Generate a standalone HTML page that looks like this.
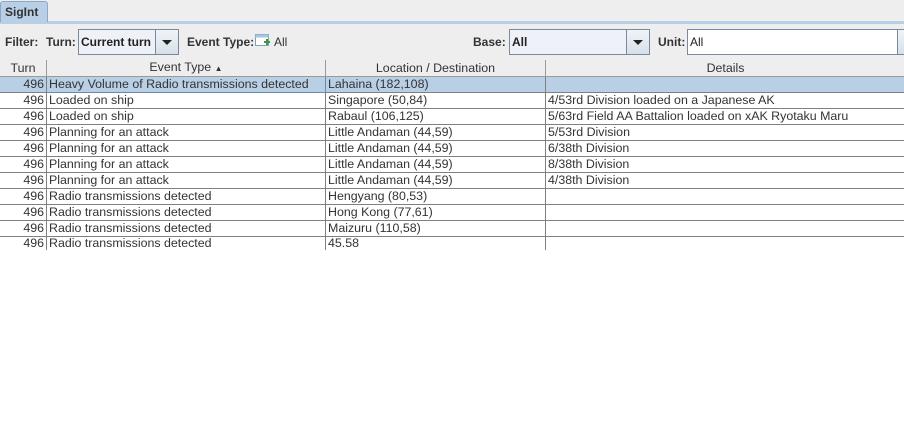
<!DOCTYPE html><html><head><style>
body{margin:0;width:904px;height:438px;background:#fff;font-family:"Liberation Sans",sans-serif;font-size:12px;position:relative;overflow:hidden;color:#333}
.a{position:absolute}
.tabbar{left:0;top:0;width:904px;height:21px;background:#eeeeee;border-bottom:3px solid #b8cfe5}
.tab{left:0;top:1px;width:46px;height:20px;background:#b8cfe5;border:1px solid #8da8c6;border-bottom:none;font-weight:bold;font-size:12px;line-height:20px;text-indent:4px;color:#333;border-radius:3px 3px 0 0}
.tool{left:0;top:24px;width:904px;height:36px;background:#eeeeee}
.lbl{font-weight:bold;top:35px;color:#333}
.combo{top:29px;height:24px;border:1px solid #7a8a99;background:#eef2f8;font-weight:bold;line-height:24px;text-indent:2px;color:#222}
.btn{position:absolute;right:0;top:0;width:22px;height:24px;border-left:1px solid #7a8a99;background:linear-gradient(#f0f4f8,#d6e0ea)}
.btn:after{content:"";position:absolute;left:6px;top:10px;border-left:5px solid transparent;border-right:5px solid transparent;border-top:5px solid #222}
table{position:absolute;left:-1px;top:60px;border-collapse:collapse;table-layout:fixed;width:906px}
td,th{height:15px;padding:0 2px;border:1px solid #808080;border-top:none;font-size:12.4px;line-height:15px;white-space:nowrap;overflow:hidden;font-weight:normal;color:#333}
th{background:#eeeeee;border-color:#9a9a9a;height:15px}
td.n{text-align:right}
tr.sel td{background:#b8cfe5}
tr.last td{height:11px;border-bottom:none;vertical-align:top;line-height:13px}
</style></head><body>
<div class="a tabbar"></div><div class="a tab">SigInt</div>
<div class="a tool"></div>
<div class="a lbl" style="left:5px">Filter:</div>
<div class="a lbl" style="left:46px">Turn:</div>
<div class="a combo" style="left:78px;width:99px">Current turn<div class="btn"></div></div>
<div class="a lbl" style="left:187px">Event Type:</div>
<svg class="a" style="left:255px;top:34px" width="16" height="15"><rect x="0.5" y="0.5" width="13" height="11" fill="#fff" stroke="#7fa0c0"/><rect x="0.5" y="0.5" width="13" height="3" fill="#a8c4e0"/><path d="M9 8h6M12 5v6" stroke="#3a9a3a" stroke-width="2"/></svg>
<div class="a" style="left:274px;top:35px">All</div>
<div class="a lbl" style="left:473px">Base:</div>
<div class="a combo" style="left:509px;width:139px">All<div class="btn"></div></div>
<div class="a lbl" style="left:658px">Unit:</div>
<div class="a combo" style="left:687px;width:232px;font-weight:normal;background:#fff">All<div class="btn"></div></div>
<table>
<colgroup><col style="width:47px"><col style="width:279px"><col style="width:220px"><col style="width:360px"></colgroup>
<tr><th>Turn</th><th>Event Type <span style="font-size:8px">▲</span></th><th>Location / Destination</th><th>Details</th></tr>
<tr class="sel"><td class="n">496</td><td style="border:1px solid #6c8bab">Heavy Volume of Radio transmissions detected</td><td>Lahaina (182,108)</td><td></td></tr>
<tr><td class="n">496</td><td>Loaded on ship</td><td>Singapore (50,84)</td><td>4/53rd Division loaded on a Japanese AK</td></tr>
<tr><td class="n">496</td><td>Loaded on ship</td><td>Rabaul (106,125)</td><td>5/63rd Field AA Battalion loaded on xAK Ryotaku Maru</td></tr>
<tr><td class="n">496</td><td>Planning for an attack</td><td>Little Andaman (44,59)</td><td>5/53rd Division</td></tr>
<tr><td class="n">496</td><td>Planning for an attack</td><td>Little Andaman (44,59)</td><td>6/38th Division</td></tr>
<tr><td class="n">496</td><td>Planning for an attack</td><td>Little Andaman (44,59)</td><td>8/38th Division</td></tr>
<tr><td class="n">496</td><td>Planning for an attack</td><td>Little Andaman (44,59)</td><td>4/38th Division</td></tr>
<tr><td class="n">496</td><td>Radio transmissions detected</td><td>Hengyang (80,53)</td><td></td></tr>
<tr><td class="n">496</td><td>Radio transmissions detected</td><td>Hong Kong (77,61)</td><td></td></tr>
<tr><td class="n">496</td><td>Radio transmissions detected</td><td>Maizuru (110,58)</td><td></td></tr>
<tr class="last"><td class="n">496</td><td>Radio transmissions detected</td><td>45.58</td><td style="border-right:none"></td></tr>
</table>
</body></html>
